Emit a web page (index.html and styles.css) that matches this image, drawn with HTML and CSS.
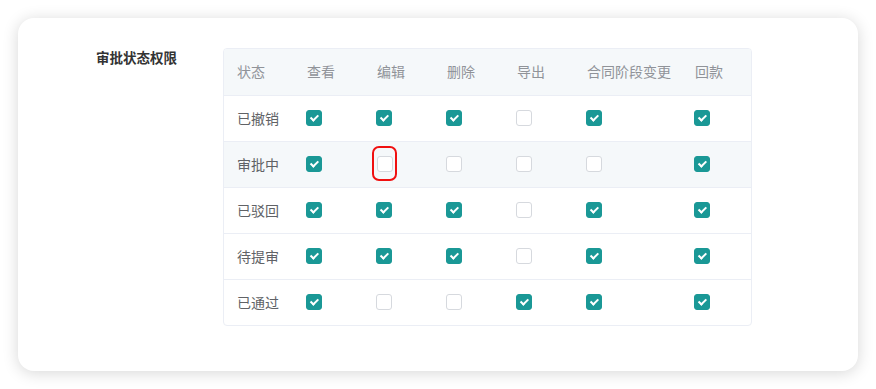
FILE: index.html
```html
<!DOCTYPE html>
<html lang="zh">
<head>
<meta charset="utf-8">
<link rel="stylesheet" href="styles.css">
</head>
<body>
<div class="card">
  <div class="label">审批状态权限</div>
  <div class="table">
    <div class="row head">
      <div class="cell c1">状态</div>
      <div class="cell c2">查看</div>
      <div class="cell c2">编辑</div>
      <div class="cell c2">删除</div>
      <div class="cell c2">导出</div>
      <div class="cell c3">合同阶段变更</div>
      <div class="cell c4">回款</div>
    </div>
    <div class="row">
      <div class="cell c1">已撤销</div>
      <div class="cell c2"><span class="cb on"></span></div>
      <div class="cell c2"><span class="cb on"></span></div>
      <div class="cell c2"><span class="cb on"></span></div>
      <div class="cell c2"><span class="cb"></span></div>
      <div class="cell c3"><span class="cb on"></span></div>
      <div class="cell c4"><span class="cb on"></span></div>
    </div>
    <div class="row hover">
      <div class="cell c1">审批中</div>
      <div class="cell c2"><span class="cb on"></span></div>
      <div class="cell c2"><span class="mark"><span class="cb"></span></span></div>
      <div class="cell c2"><span class="cb"></span></div>
      <div class="cell c2"><span class="cb"></span></div>
      <div class="cell c3"><span class="cb"></span></div>
      <div class="cell c4"><span class="cb on"></span></div>
    </div>
    <div class="row">
      <div class="cell c1">已驳回</div>
      <div class="cell c2"><span class="cb on"></span></div>
      <div class="cell c2"><span class="cb on"></span></div>
      <div class="cell c2"><span class="cb on"></span></div>
      <div class="cell c2"><span class="cb"></span></div>
      <div class="cell c3"><span class="cb on"></span></div>
      <div class="cell c4"><span class="cb on"></span></div>
    </div>
    <div class="row">
      <div class="cell c1">待提审</div>
      <div class="cell c2"><span class="cb on"></span></div>
      <div class="cell c2"><span class="cb on"></span></div>
      <div class="cell c2"><span class="cb on"></span></div>
      <div class="cell c2"><span class="cb"></span></div>
      <div class="cell c3"><span class="cb on"></span></div>
      <div class="cell c4"><span class="cb on"></span></div>
    </div>
    <div class="row last">
      <div class="cell c1">已通过</div>
      <div class="cell c2"><span class="cb on"></span></div>
      <div class="cell c2"><span class="cb"></span></div>
      <div class="cell c2"><span class="cb"></span></div>
      <div class="cell c2"><span class="cb on"></span></div>
      <div class="cell c3"><span class="cb on"></span></div>
      <div class="cell c4"><span class="cb on"></span></div>
    </div>
  </div>
</div>
</body>
</html>
```
FILE: styles.css
```css
html, body {
  margin: 0;
  padding: 0;
  background: #fff;
}
body {
  padding: 18px;
  font-family: "Noto Sans CJK SC", "Noto Sans", sans-serif;
}
.card {
  width: 840px;
  height: 353px;
  box-sizing: border-box;
  background: #fff;
  border-radius: 16px;
  box-shadow: 0 2px 16px rgba(0, 0, 0, 0.16);
  display: flex;
  padding: 30px 0 0 78px;
}
.label {
  width: 127px;
  font-size: 13.5px;
  font-weight: bold;
  color: #333;
  line-height: 16px;
  padding-top: 1px;
}
.table {
  width: 529px;
  height: 278px;
  box-sizing: border-box;
  border: 1px solid #ebeef5;
  border-radius: 4px;
  overflow: hidden;
  display: flex;
  flex-direction: column;
}
.row {
  display: flex;
  height: 46px;
  padding-bottom: 2px;
  border-bottom: 1px solid #ebeef5;
  box-sizing: border-box;
  align-items: center;
  font-size: 14px;
  color: #606266;
}
.row.last { border-bottom: none; height: 45px; }
.row.head {
  height: 47px;
  background: #f5f8fa;
  color: #909399;
}
.row.hover { background: #f5f8fa; }
.cell {
  box-sizing: border-box;
  padding-left: 13px;
  display: flex;
  align-items: center;
}
.c1, .c2 { width: 70px; }
.c3 { width: 108px; }
.c4 { flex: 1; }
.cb {
  width: 16px;
  height: 16px;
  margin-left: -1px;
  box-sizing: border-box;
  border: 1px solid #d6d9de;
  border-radius: 3px;
  background: #fff;
  display: inline-block;
  position: relative;
}
.cb.on {
  background: #1a9896;
  border-color: #1a9896;
}
.cb.on::after {
  content: "";
  position: absolute;
  left: 5px;
  top: 2.5px;
  width: 2.5px;
  height: 6px;
  border: solid #fff;
  border-width: 0 2px 2px 0;
  transform: rotate(45deg);
}
.mark {
  display: inline-flex;
  align-items: center;
  justify-content: center;
  width: 25px;
  height: 35px;
  box-sizing: border-box;
  border: 2px solid #f01010;
  border-radius: 7px;
  margin-left: -5px;
}
.mark .cb { margin-left: 0; }
```
